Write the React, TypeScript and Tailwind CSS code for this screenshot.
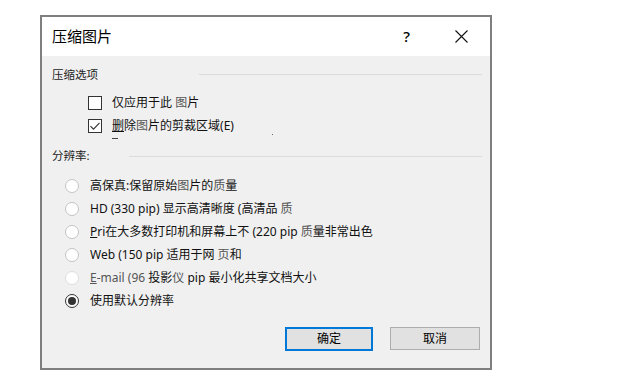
import React from "react";

const font = "font-['Segoe_UI','Noto_Sans','Noto_Sans_CJK_SC',sans-serif]";

function Checkbox({ checked }: { checked?: boolean }) {
  return (
    <div className="w-[14px] h-[14px] border border-[#333333] bg-white flex items-center justify-center shrink-0">
      {checked && (
        <svg width="12" height="12" viewBox="0 0 12 12">
          <path d="M1.5 6.2 L4.5 9.2 L10.5 2.8" fill="none" stroke="#333" strokeWidth="1.1" />
        </svg>
      )}
    </div>
  );
}

function Radio({ selected, faint }: { selected?: boolean; faint?: boolean }) {
  return (
    <div
      className={
        "w-[14px] h-[14px] rounded-full bg-white flex items-center justify-center shrink-0 border " +
        (selected ? "border-[#333333]" : faint ? "border-[#dedede]" : "border-[#c4c4c4]")
      }
    >
      {selected && <div className="w-[8px] h-[8px] rounded-full bg-[#333333]" />}
    </div>
  );
}

function RadioRow({ children, selected, faint }: { children: React.ReactNode; selected?: boolean; faint?: boolean }) {
  return (
    <div className="h-[23px] flex items-center pl-[13px]">
      <Radio selected={selected} faint={faint} />
      <span className="ml-[11px] text-[12px] text-[#111] whitespace-nowrap">{children}</span>
    </div>
  );
}

export default function App() {
  return (
    <div className={"w-[617px] h-[387px] bg-white pt-[15px] pl-[40px] " + font}>
      <div className="w-[452px] h-[355px] border-2 border-[#7f7f7f] bg-[#f0f0f0] flex flex-col">
        {/* title bar */}
        <div className="h-[39px] bg-white flex items-center shrink-0">
          <span className="ml-[10px] text-[15px] text-black">压缩图片</span>
          <span className="ml-auto text-[15px] font-medium text-black mr-[45px]">?</span>
          <svg width="13" height="13" viewBox="0 0 13 13" className="mr-[22px]">
            <path d="M0.5 0.5 L12.5 12.5 M12.5 0.5 L0.5 12.5" stroke="#111" strokeWidth="1.1" />
          </svg>
        </div>

        <div className="flex flex-col pl-[10px] pr-[8px] pt-[9px]">
          {/* section 1 */}
          <div className="h-[20px] flex items-center">
            <span className="text-[11.5px] text-[#222] whitespace-nowrap">压缩选项</span>
            <div className="ml-[101px] flex-1 h-[1px] bg-[#dcdcdc] -mt-[2px]" />
          </div>
          <div className="pl-[36px] pt-[6px] flex flex-col">
            <div className="h-[23px] flex items-center">
              <Checkbox />
              <span className="ml-[10px] text-[12px] text-[#111]">
                仅应用于此 <span className="text-[#555]">图</span>片
              </span>
            </div>
            <div className="h-[23px] flex items-center">
              <Checkbox checked />
              <span className="ml-[10px] text-[12px] text-[#111]">
                <span className="underline">删</span>除<span className="text-[#555]">图</span>片的剪裁区域(E)
              </span>
            </div>
            <div className="h-[9px] relative">
              <div className="absolute left-[24px] top-[1px] w-[6px] h-[1px] bg-[#444]" />
              <div className="absolute left-[184px] top-[-3px] w-[1px] h-[1px] bg-[#666]" />
            </div>
          </div>

          {/* section 2 */}
          <div className="h-[20px] flex items-center">
            <span className="text-[11.5px] text-[#222] whitespace-nowrap">分辨率:</span>
            <div className="ml-[39px] flex-1 h-[1px] bg-[#dcdcdc]" />
          </div>
          <div className="pt-[8px] flex flex-col">
            <RadioRow>
              高保真:保留原始<span className="text-[#555]">图</span>片的<span className="text-[#555]">质</span>量
            </RadioRow>
            <RadioRow>
              HD (330 pip) 显示高清晰度 (高清品 <span className="text-[#555]">质</span>
            </RadioRow>
            <RadioRow>
              <span className="underline">P</span>ri在大多数打印机和屏幕上不 (220 pip <span className="text-[#555]">质</span>量非常出色
            </RadioRow>
            <RadioRow>
              Web (150 pip 适用于网 <span className="text-[#555]">页</span>和
            </RadioRow>
            <RadioRow faint>
              <span className="text-[#555]">
                <span className="underline">E</span>-mail (96
              </span>{" "}
              投影<span className="text-[#555]">仪</span> pip 最小化共享文档大小
            </RadioRow>
            <RadioRow selected>使用默认分辨率</RadioRow>
          </div>

          {/* buttons */}
          <div className="flex justify-end mt-[15px] pr-[2px]">
            <button className="w-[88px] h-[24px] border-2 border-[#0078d7] bg-[#e1e1e1] text-[12px] text-black flex items-center justify-center">
              确定
            </button>
            <button className="ml-[17px] w-[90px] h-[23px] border border-[#adadad] bg-[#e1e1e1] text-[12px] text-black flex items-center justify-center">
              取消
            </button>
          </div>
        </div>
      </div>
    </div>
  );
}
